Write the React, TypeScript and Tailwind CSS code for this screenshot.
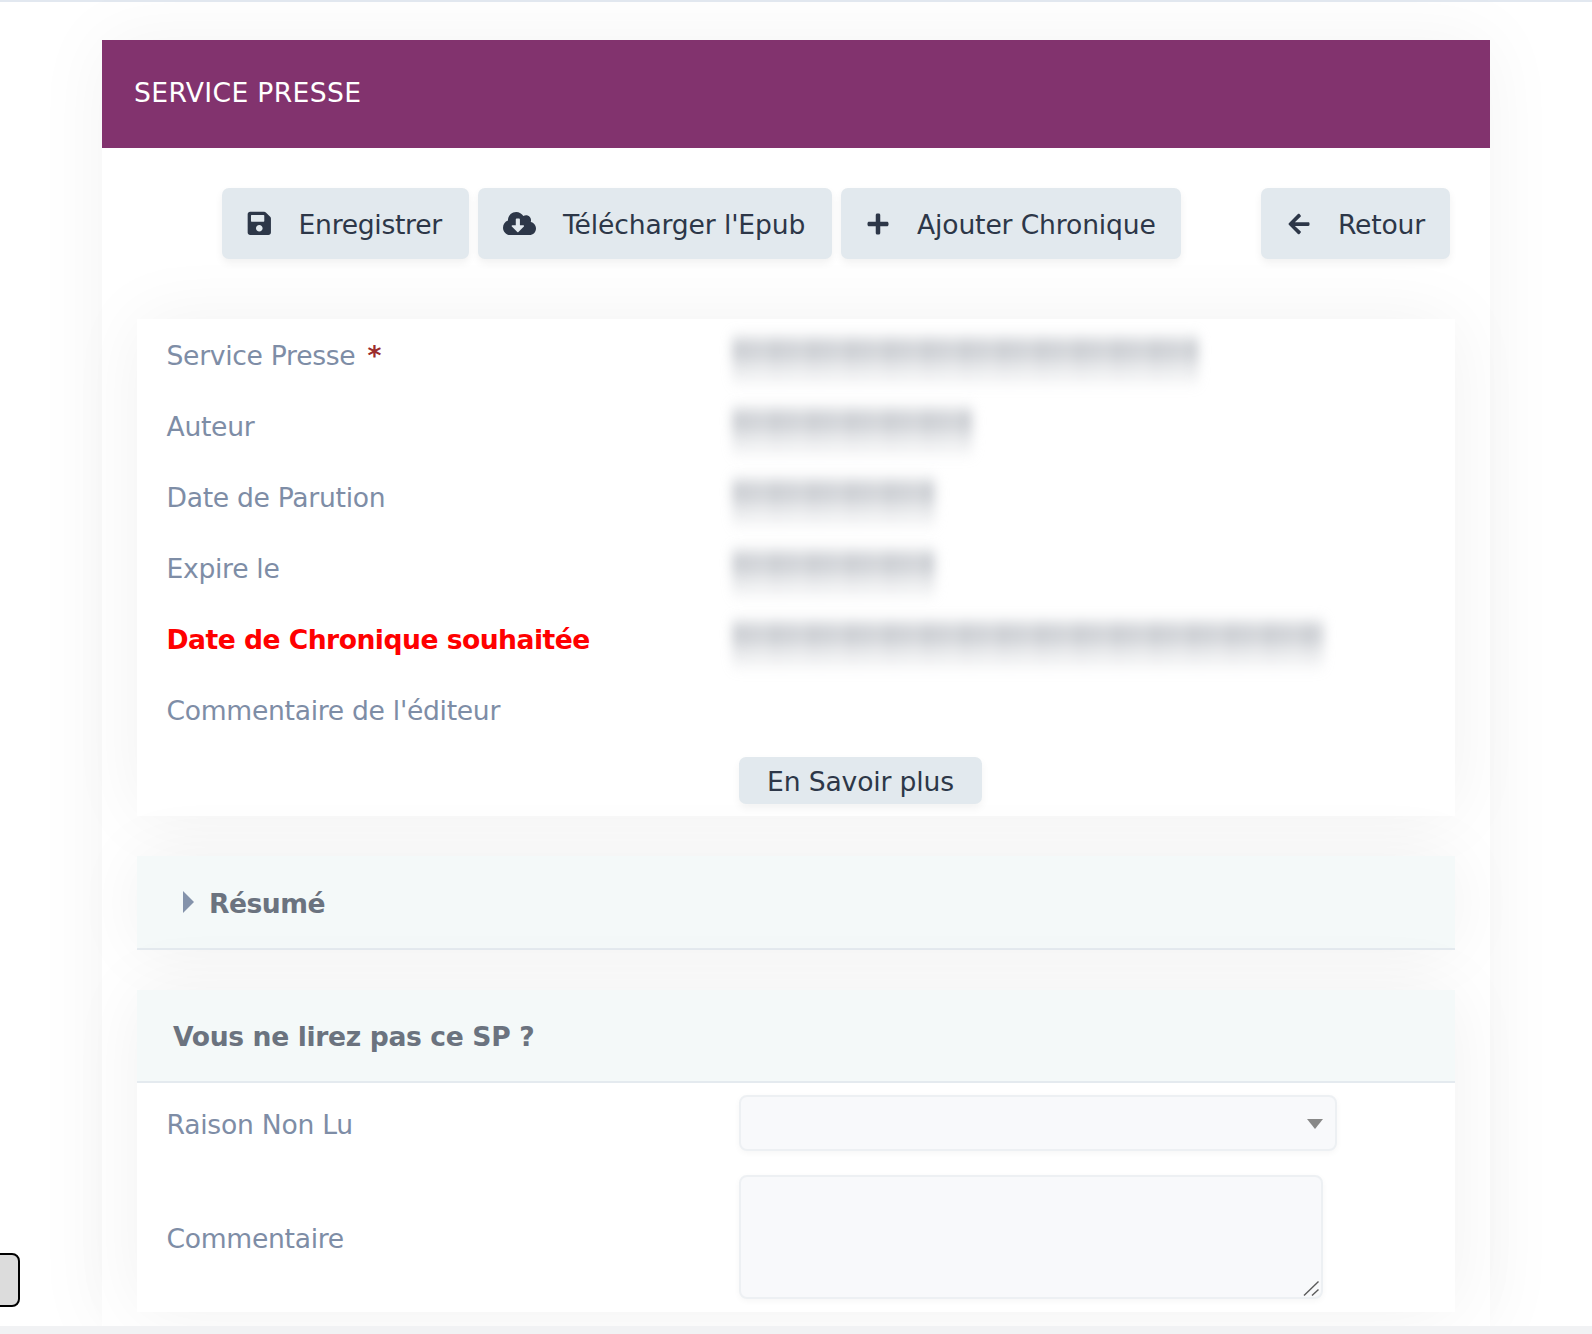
import { FaSave, FaCloudDownloadAlt, FaPlus, FaArrowLeft } from "react-icons/fa";

const font = "font-['DejaVu_Sans','Liberation_Sans',sans-serif]";

function ToolButton({ icon, label, extra }: { icon: React.ReactNode; label: string; extra?: string }) {
  return (
    <button className={`flex h-[71px] items-center rounded-[7px] bg-[#e2e9ee] text-[26.6px] text-[#2d3748] shadow-[0_4px_8px_rgba(0,0,0,0.06)] ${extra ?? ""}`}>
      {icon}
      <span className="pt-[2px]">{label}</span>
    </button>
  );
}

function Blurred({ w }: { w: string }) {
  return (
    <div className={`${w} -ml-[6px] mt-[12px] self-start blur-[6px]`}>
      <div className="h-[58px] opacity-70 [background:repeating-linear-gradient(90deg,#a4a9b1_0_8px,#d0d3d8_8px_13px,#b0b4bb_13px_22px,#d6d9dd_22px_27px,#aaaeb6_27px_33px,#dadde0_33px_38px)] [mask-image:linear-gradient(transparent,#000_25%,#000_38%,rgba(0,0,0,0.5)_62%,transparent)]" />
    </div>
  );
}

function Row({ label, value, required, red }: { label: string; value?: string; required?: boolean; red?: boolean }) {
  return (
    <div className="flex h-[71px] items-center">
      <div className={`w-[572px] pt-[2px] text-[26.6px] ${red ? "font-bold tracking-[-0.52px] text-[#ff0000]" : "tracking-[-0.3px] text-[#7e8da6]"}`}>
        {label}
        {required && <span className="ml-[12px] font-bold text-[#9b2c2c]">*</span>}
      </div>
      {value && <Blurred w={value} />}
    </div>
  );
}

export default function App() {
  return (
    <div className={`${font} relative flex h-[1334px] flex-col overflow-hidden bg-white`}>
      <div className="h-[2px] shrink-0 bg-[#e2e8f0]" />
      <main className="min-h-0 flex-1 px-[102px] pt-[38px]">
        <div className="h-full w-[1388px] bg-white shadow-[0_0_70px_rgba(0,0,0,0.05)]">
          <div className="flex h-[108px] items-center bg-[#82336e] pb-[2px] pl-[32px] text-[26.6px] tracking-[0.35px] text-white">SERVICE PRESSE</div>
          <div className="flex gap-[9px] pl-[120px] pr-[40px] pt-[40px]">
            <ToolButton icon={<FaSave size={26.6} />} label="Enregistrer" extra="w-[247px] gap-[26px] pl-[24px] tracking-[-0.3px]" />
            <ToolButton icon={<FaCloudDownloadAlt size={33} />} label="Télécharger l'Epub" extra="w-[354px] gap-[27px] pl-[25px] tracking-[-0.15px]" />
            <ToolButton icon={<FaPlus size={24} />} label="Ajouter Chronique" extra="w-[340px] gap-[27px] pl-[25px] tracking-[-0.15px]" />
            <ToolButton icon={<FaArrowLeft size={24} />} label="Retour" extra="ml-auto w-[189px] gap-[27px] pl-[26px] tracking-[-0.2px]" />
          </div>
          <div className="ml-[35px] mt-[60px] w-[1318px]">
            <section className="h-[497px] bg-white pl-[29.5px] shadow-[0_0_70px_rgba(0,0,0,0.06)]">
              <Row label="Service Presse" required value="w-[465px]" />
              <Row label="Auteur" value="w-[240px]" />
              <Row label="Date de Parution" value="w-[203px]" />
              <Row label="Expire le" value="w-[203px]" />
              <Row label="Date de Chronique souhaitée" red value="w-[590px]" />
              <Row label="Commentaire de l'éditeur" />
              <div className="ml-[572px] mt-[12px]">
                <button className="h-[47px] w-[243px] rounded-[7px] bg-[#e2e9ee] pl-[1px] pt-[2px] text-[26.6px] tracking-[-0.15px] text-[#2d3748] shadow-[0_4px_8px_rgba(0,0,0,0.05)]">En Savoir plus</button>
              </div>
            </section>
            <section className="mt-[40px] flex h-[94px] items-center gap-[15px] border-b-2 border-[#e4eaef] bg-[#f4f9f9] pl-[46px] shadow-[0_0_70px_rgba(0,0,0,0.06)]">
              <div className="h-0 w-0 border-y-[11px] border-l-[11px] border-y-transparent border-l-[#8493ab]" />
              <span className="pt-[3px] text-[26.6px] font-bold tracking-[-0.5px] text-[#6b737f]">Résumé</span>
            </section>
            <section className="mt-[40px] h-[322px] bg-white shadow-[0_0_70px_rgba(0,0,0,0.06)]">
              <div className="flex h-[93px] items-center border-b-2 border-[#e4eaef] bg-[#f4f9f9] pl-[36px] pt-[2px] text-[26.6px] font-bold tracking-[-0.36px] text-[#6b737f]">Vous ne lirez pas ce SP ?</div>
              <div className="pl-[29.5px] pt-[12px]">
                <div className="flex h-[56px] items-center">
                  <div className="w-[572.5px] pt-[4px] text-[26.6px] tracking-[-0.25px] text-[#7e8da6]">Raison Non Lu</div>
                  <div className="flex h-[56px] w-[598px] items-center justify-end rounded-[8px] border-2 border-[#edf0f3] bg-[#f8f9fb] pr-[12px] pt-[2px] shadow-[0_2px_6px_rgba(0,0,0,0.04)]">
                    <div className="h-0 w-0 border-x-[8px] border-t-[10px] border-x-transparent border-t-[#888888]" />
                  </div>
                </div>
                <div className="mt-[24px] flex h-[124px] items-center">
                  <div className="w-[572.5px] pt-[4px] text-[26.6px] tracking-[-0.3px] text-[#7e8da6]">Commentaire</div>
                  <div className="relative h-[124px] w-[584px]">
                    <textarea className="block h-full w-full resize-none rounded-[8px] border-2 border-[#edf0f3] bg-[#f8f9fb] shadow-[0_2px_6px_rgba(0,0,0,0.04)]" />
                    <svg className="absolute bottom-[3px] right-[4px]" width="16" height="16" viewBox="0 0 16 16" fill="none" stroke="#5a5a5a" strokeWidth="1.4">
                      <path d="M15.5 1.5 1 15.5" />
                      <path d="M15.5 9.5 9 15.5" />
                    </svg>
                  </div>
                </div>
              </div>
            </section>
          </div>
        </div>
      </main>
      <div className="h-[8px] shrink-0 bg-[#f1f2f4]" />
      <div className="absolute left-[-40px] top-[1253px] h-[54px] w-[60px] rounded-[8px] border-2 border-black bg-[#dcdcdc]" />
    </div>
  );
}
